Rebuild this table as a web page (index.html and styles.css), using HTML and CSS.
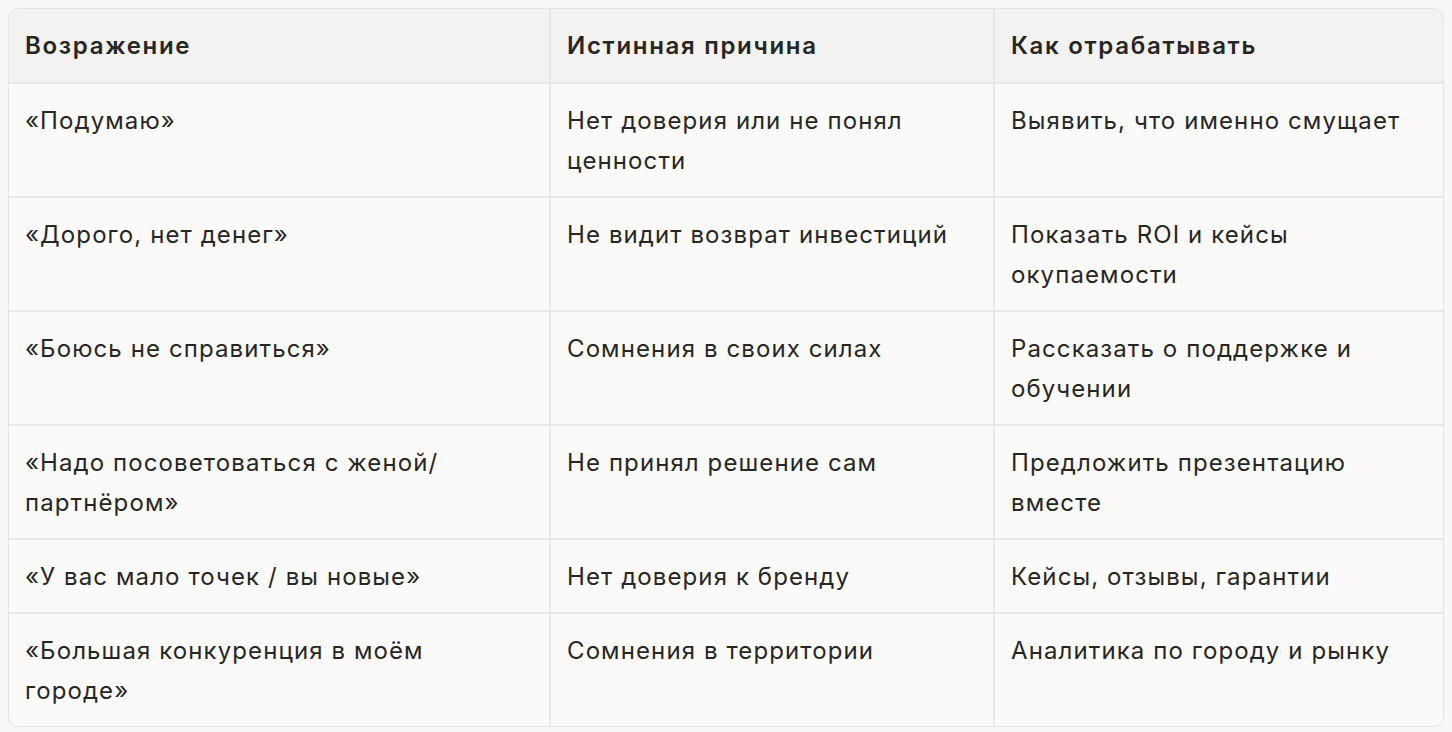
FILE: index.html
```html
<!DOCTYPE html>
<html lang="ru">
<head>
<meta charset="utf-8">
<link rel="stylesheet" href="styles.css">
</head>
<body>
<div class="table-wrap">
<table class="grid">
<colgroup>
<col class="c1"><col class="c2"><col class="c3">
</colgroup>
<thead>
<tr><th>Возражение</th><th>Истинная причина</th><th>Как отрабатывать</th></tr>
</thead>
<tbody>
<tr><td>«Подумаю»</td><td>Нет доверия или не понял ценности</td><td>Выявить, что именно смущает</td></tr>
<tr><td>«Дорого, нет денег»</td><td>Не видит возврат инвестиций</td><td>Показать ROI и кейсы окупаемости</td></tr>
<tr><td>«Боюсь не справиться»</td><td>Сомнения в своих силах</td><td>Рассказать о поддержке и обучении</td></tr>
<tr><td>«Надо посоветоваться с женой/ партнёром»</td><td>Не принял решение сам</td><td>Предложить презентацию вместе</td></tr>
<tr><td>«У вас мало точек / вы новые»</td><td>Нет доверия к бренду</td><td>Кейсы, отзывы, гарантии</td></tr>
<tr><td>«Большая конкуренция в моём городе»</td><td>Сомнения в территории</td><td>Аналитика по городу и рынку</td></tr>
</tbody>
</table>
</div>
</body>
</html>
```

FILE: styles.css
```css
html, body {
  margin: 0;
  padding: 0;
  background: #f9f8f6;
}
body {
  padding: 8px;
  font-family: Inter, "Noto Sans", sans-serif;
  color: #262625;
}
.table-wrap {
  width: 1436px;
  box-sizing: border-box;
  border: 1.5px solid #e6e5e2;
  border-radius: 10px;
  overflow: hidden;
  background: #fbfaf8;
}
.grid {
  width: 100%;
  border-collapse: collapse;
  table-layout: fixed;
  font-size: 24px;
  line-height: 40px;
  letter-spacing: 1.1px;
}
.c1 { width: 541px; }
.c2 { width: 444px; }
.c3 { width: auto; }
.grid th, .grid td {
  text-align: left;
  vertical-align: top;
  padding: 17px 16px 15px 16px;
  border-left: 2px solid #e9e8e5;
  border-top: 2px solid #e9e8e5;
}
.grid tr > :first-child { border-left: none; }
.grid thead th {
  border-top: none;
  background: #f3f2f0;
  font-weight: 600;
  letter-spacing: 1.7px;
  padding-top: 17px;
  padding-bottom: 16px;
}
.grid td { font-weight: 400; }
```
